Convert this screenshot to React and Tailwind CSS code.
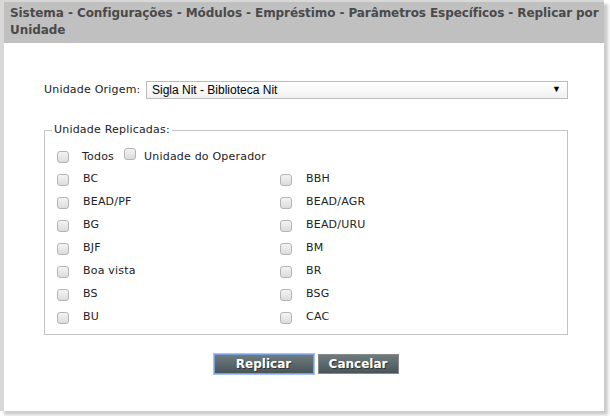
const left = ['BC', 'BEAD/PF', 'BG', 'BJF', 'Boa vista', 'BS', 'BU'];
const right = ['BBH', 'BEAD/AGR', 'BEAD/URU', 'BM', 'BR', 'BSG', 'CAC'];

function Box() {
  return (
    <span className="inline-block w-[12px] h-[12px] rounded-[3px] border border-[#b4b4b4] bg-gradient-to-b from-[#f4f4f4] to-[#dcdcdc] shrink-0" />
  );
}

function Item({ label }) {
  return (
    <div className="flex items-center h-[23px]">
      <Box />
      <span className="ml-[14px]">{label}</span>
    </div>
  );
}

export default function App() {
  return (
    <div className="w-[610px] h-[416px] bg-white" style={{ fontFamily: '"DejaVu Sans", Verdana, sans-serif' }}>
      <div className="w-[604px] h-[411px] border-l-4 border-t-2 border-[#d8d8d8] shadow-[4px_4px_3px_#cccccc] flex flex-col">
        {/* header */}
        <div className="h-[41px] bg-[#c0c0c0] pl-[6px] pt-[3px] text-[12px] leading-[17px] font-bold text-[#4a4a4a] tracking-[-0.08px]">
          Sistema - Configurações - Módulos - Empréstimo - Parâmetros Específicos - Replicar por Unidade
        </div>

        <div className="flex-1 bg-white pl-[40px] pr-[36px] pt-[38px] text-[11px] text-[#222] tracking-[0.2px]">
          <div className="flex items-center">
            <span className="w-[102px]">Unidade Origem:</span>
            <div
              className="flex-1 h-[18px] border border-[#bcbcbc] bg-gradient-to-b from-white to-[#f1f1f1] flex items-center px-[5px] text-[12px] text-black tracking-normal"
              style={{ fontFamily: '"Liberation Sans", Arial, sans-serif' }}
            >
              <span className="flex-1">Sigla Nit - Biblioteca Nit</span>
              <span className="text-[9px] mr-[1px]">▼</span>
            </div>
          </div>

          <fieldset className="mt-[24px] border border-[#c4c4c4] px-[12px] pb-[5px] pt-0">
            <legend className="px-[2px] ml-[-5px] text-[11px] leading-[14px]">Unidade Replicadas:</legend>
            <div className="flex items-center h-[22px] mt-[9px]">
              <Box />
              <span className="ml-[13px]">Todos</span>
              <span className="ml-[10px]"><Box /></span>
              <span className="ml-[8px]">Unidade do Operador</span>
            </div>
            <div className="grid grid-cols-[223px_1fr]">
              <div>
                {left.map(l => <Item key={l} label={l} />)}
              </div>
              <div>
                {right.map(r => <Item key={r} label={r} />)}
              </div>
            </div>
          </fieldset>

          <div className="flex justify-center gap-[4px] mt-[19px] tracking-normal">
            <button className="w-[100px] h-[20px] bg-gradient-to-b from-[#6f7c7e] to-[#48565a] border border-[#7ba0e0] outline outline-1 outline-[#a6c3f0] text-white font-bold text-[12px] leading-none [text-shadow:1px_1px_0_#333]">
              Replicar
            </button>
            <button className="w-[81px] h-[20px] bg-gradient-to-b from-[#6f7c7e] to-[#48565a] border border-[#888] text-white font-bold text-[12px] leading-none [text-shadow:1px_1px_0_#333]">
              Cancelar
            </button>
          </div>
        </div>
      </div>
    </div>
  );
}
